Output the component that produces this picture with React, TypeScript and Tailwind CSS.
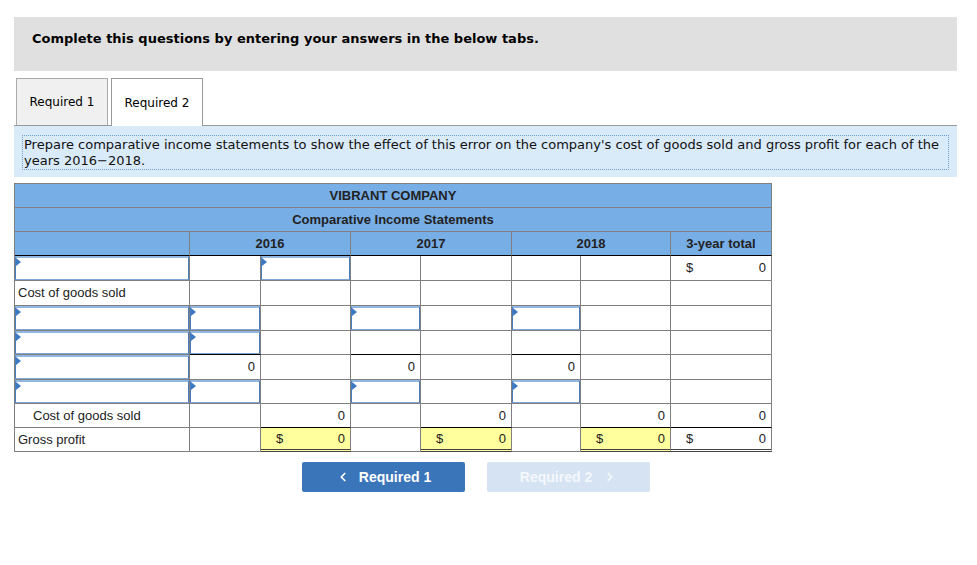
import React from "react";
import { ChevronLeft, ChevronRight } from "lucide-react";

type Cell =
  | { kind: "empty" }
  | { kind: "input" }
  | { kind: "label"; text: string; indent?: boolean }
  | { kind: "num"; value: string; dollar?: boolean; yellow?: boolean };

type Row = { h: number; cells: Cell[]; black?: number[]; dbl?: number[] };

const E: Cell = { kind: "empty" };
const I: Cell = { kind: "input" };
const n = (value: string, dollar = false, yellow = false): Cell => ({ kind: "num", value, dollar, yellow });

// column widths: label, 2016 a/b, 2017 a/b, 2018 a/b, total
const widths = [175, 71, 90, 70, 91, 69, 90, 101];

const rows: Row[] = [
  { h: 25, cells: [I, E, I, E, E, E, E, n("0", true)] },
  { h: 25, cells: [{ kind: "label", text: "Cost of goods sold" }, E, E, E, E, E, E, E] },
  { h: 25, cells: [I, I, E, I, E, I, E, E] },
  { h: 24, cells: [I, I, E, E, E, E, E, E], black: [1, 3, 5] },
  { h: 25, cells: [I, n("0"), E, n("0"), E, n("0"), E, E] },
  { h: 24, cells: [I, I, E, I, E, I, E, E] },
  {
    h: 24,
    cells: [{ kind: "label", text: "Cost of goods sold", indent: true }, E, n("0"), E, n("0"), E, n("0"), n("0")],
    black: [2, 4, 6, 7],
  },
  {
    h: 24,
    cells: [{ kind: "label", text: "Gross profit" }, E, n("0", true, true), E, n("0", true, true), E, n("0", true, true), n("0", true)],
    dbl: [2, 4, 6, 7],
  },
];

const InputBox = ({ h }: { h: number }) => (
  <div
    className="relative bg-white border border-[#4a7cbd] border-t-2 border-t-[#92b7e1] border-b-[#7fa6d6]"
    style={{ height: h }}
  >
    <span className="absolute left-0 top-0 w-0 h-0 border-y-[4px] border-y-transparent border-l-[5px] border-l-[#3d78c2]" />
  </div>
);

const BodyCell = ({ cell, h, black, dbl }: { cell: Cell; h: number; black: boolean; dbl: boolean }) => {
  let bottom = "border-b border-b-[#808080]";
  if (black) bottom = "border-b border-b-black";
  if (dbl) bottom = "border-b-[3px] border-double border-b-[#444]";

  if (cell.kind === "input") {
    return (
      <td className={`p-0 align-top border-r border-r-[#808080] ${bottom}`}>
        <InputBox h={h - 1} />
      </td>
    );
  }
  if (cell.kind === "label") {
    return (
      <td className={`p-0 border-r border-r-[#808080] ${bottom} ${cell.indent ? "pl-[18px]" : "pl-[3px]"}`}>
        {cell.text}
      </td>
    );
  }
  if (cell.kind === "num") {
    return (
      <td className={`p-0 border-r border-r-[#808080] ${bottom} ${cell.yellow ? "bg-[#ffff9e]" : ""}`}>
        <div className="flex justify-between pl-[15px] pr-[5px]">
          <span>{cell.dollar ? "$" : ""}</span>
          <span>{cell.value}</span>
        </div>
      </td>
    );
  }
  return <td className={`p-0 border-r border-r-[#808080] ${bottom}`} />;
};

const App = () => {
  return (
    <div className="w-[977px] h-[565px] bg-white px-[14px] pt-[17px] font-['DejaVu_Sans',sans-serif] text-black">
      <div className="w-[943px] h-[54px] bg-[#e0e0e0] pl-[18px] pt-[14px]">
        <h1 className="text-[13px] leading-[16px] font-bold">Complete this questions by entering your answers in the below tabs.</h1>
      </div>

      {/* tabs */}
      <div className="w-[943px] mt-[7px] flex items-end gap-[3px] pl-[2px] border-b border-[#999]">
        <div className="w-[92px] h-[47px] bg-[#f0f0f0] border border-[#aaa] border-b-0 flex items-center justify-center text-[12px]">
          Required 1
        </div>
        <div className="w-[92px] h-[48px] -mb-px bg-white border border-[#999] border-b-0 flex items-center justify-center text-[12px] relative">
          Required 2
        </div>
      </div>

      <div className="w-[943px] bg-[#d9eaf9] px-[8px] pt-[9px] pb-[7px]">
        <p className="border border-dotted border-[#6e9dd4] pl-[1px] pt-[1px] text-[13px] leading-[16px] text-[#111]">
          Prepare comparative income statements to show the effect of this error on the company's cost of goods sold and gross profit for each of the
          <br />
          years 2016−2018.
        </p>
      </div>

      {/* table */}
      <table
        className="mt-[6px] table-fixed border-separate border-spacing-0 border-l border-t border-[#808080] font-['Liberation_Sans',Arial,sans-serif] text-[13px] text-[#222]"
        style={{ width: 758 }}
      >
        <colgroup>
          {widths.map((w, i) => (
            <col key={i} style={{ width: w }} />
          ))}
        </colgroup>
        <thead className="bg-[#78aee6] font-bold text-[#222]">
          <tr className="h-[24px]">
            <th colSpan={8} className="p-0 font-bold text-center border-r border-b border-[#808080]">
              VIBRANT COMPANY
            </th>
          </tr>
          <tr className="h-[24px]">
            <th colSpan={8} className="p-0 font-bold text-center border-r border-b border-[#808080]">
              Comparative Income Statements
            </th>
          </tr>
          <tr className="h-[24px]">
            <th className="p-0 border-r border-r-[#808080] border-b border-b-black" />
            <th colSpan={2} className="p-0 font-bold border-r border-r-[#808080] border-b border-b-black">2016</th>
            <th colSpan={2} className="p-0 font-bold border-r border-r-[#808080] border-b border-b-black">2017</th>
            <th colSpan={2} className="p-0 font-bold border-r border-r-[#808080] border-b border-b-black">2018</th>
            <th className="p-0 font-bold border-r border-r-[#808080] border-b border-b-black">3-year total</th>
          </tr>
        </thead>
        <tbody>
          {rows.map((row, ri) => (
            <tr key={ri} style={{ height: row.h }}>
              {row.cells.map((cell, ci) => (
                <BodyCell
                  key={ci}
                  cell={cell}
                  h={row.h}
                  black={!!row.black?.includes(ci)}
                  dbl={!!row.dbl?.includes(ci)}
                />
              ))}
            </tr>
          ))}
        </tbody>
      </table>

      {/* nav buttons */}
      <div className="mt-[10px] ml-[288px] flex gap-[22px] font-['Liberation_Sans',Arial,sans-serif]">
        <button className="w-[163px] h-[30px] rounded-[2px] bg-[#3a75b9] text-white text-[14px] font-bold flex items-center justify-center gap-[9px]">
          <ChevronLeft size={14} strokeWidth={3} />
          <span>Required 1</span>
        </button>
        <button className="w-[163px] h-[30px] rounded-[2px] bg-[#d6e3f2] text-[#f4f8fc] text-[14px] font-bold flex items-center justify-center gap-[11px]">
          <span>Required 2</span>
          <ChevronRight size={14} strokeWidth={3} />
        </button>
      </div>
    </div>
  );
};

export default App;
